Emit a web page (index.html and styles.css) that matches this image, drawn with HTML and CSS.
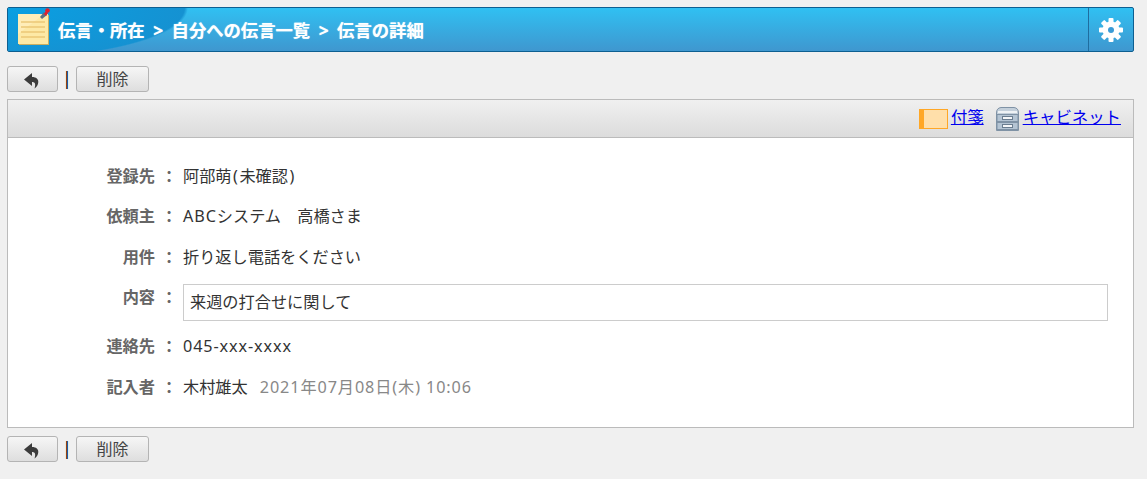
FILE: index.html
```html
<!DOCTYPE html>
<html lang="ja">
<head>
    <meta charset="UTF-8">
    <title>伝言の詳細</title>
    <link rel="stylesheet" href="styles.css">
</head>
<body>
    <div class="titlebar">
        <div class="title-main">
            <svg class="note-icon" width="33" height="37" viewBox="0 0 33 37">
                <rect x="2" y="7" width="30" height="30" fill="#c9ae62"/>
                <rect x="1" y="6" width="30" height="30" fill="#fde9a6"/>
                <path d="M1 6h26L1 26z" fill="#ffedb8"/>
                <path d="M4 14h24M4 19h24M4 24h24M4 29h24" stroke="#ecc777" stroke-width="1.500"/>
                <path d="M23 9l4-5 3 3-5 4z" fill="#5d6f80"/>
                <path d="M27 6l2-3 2 2-2 3z" fill="#e2202c"/>
                <circle cx="30.500" cy="2.500" r="2.300" fill="#e2202c"/>
            </svg>
            <span class="title-text">伝言・所在 &gt; 自分への伝言一覧 &gt; 伝言の詳細</span>
        </div>
        <div class="title-config">
            <svg width="26" height="26" viewBox="0 0 26 26">
                <circle cx="13" cy="13" r="8.500" fill="#fff"/>
                <g fill="#fff">
                    <rect x="10.500" y="1" width="5" height="24" rx="1"/>
                    <rect x="10.500" y="1" width="5" height="24" rx="1" transform="rotate(45 13 13)"/>
                    <rect x="10.500" y="1" width="5" height="24" rx="1" transform="rotate(90 13 13)"/>
                    <rect x="10.500" y="1" width="5" height="24" rx="1" transform="rotate(135 13 13)"/>
                </g>
                <circle cx="13" cy="13" r="3" fill="#3a9bd6"/>
            </svg>
        </div>
    </div>

    <div class="toolbar">
        <button class="btn btn-back" type="button">
            <svg width="18" height="16" viewBox="0 0 18 16"><path fill="#3b3b3b" d="M8 0L0 6.500 8 13V9c3 0 4 2 2.500 6.500C15 13 17 4 8 4z"/></svg>
        </button>
        <span class="sep">|</span>
        <button class="btn btn-del" type="button">削除</button>
    </div>

    <div class="panel">
        <div class="panel-head">
            <span class="tag-icon"></span><a href="#">付箋</a>
            <svg class="cabinet-icon" width="23" height="24" viewBox="0 0 23 24">
                <path d="M.5 6Q.5 1 5 .5h13q4.500.5 4.500 5.500v17.500H.5z" fill="#c3cfda" stroke="#7f92a5"/>
                <path d="M2 5h19" stroke="#eef2f5" stroke-width="2"/>
                <rect x="1" y="7.500" width="21" height="7" fill="#b4c4d3" stroke="#7f92a5"/>
                <rect x="1" y="15.500" width="21" height="7" fill="#b4c4d3" stroke="#7f92a5"/>
                <rect x="6.500" y="9.500" width="10" height="3" fill="#f4f6f8" stroke="#6a7d90"/>
                <rect x="6.500" y="17.500" width="10" height="3" fill="#f4f6f8" stroke="#6a7d90"/>
            </svg><a href="#">キャビネット</a>
        </div>
        <div class="panel-body">
            <div class="row">
                <div class="label">登録先</div><div class="colon">：</div>
                <div class="value">阿部萌<span class="paren">(</span>未確認<span class="paren">)</span></div>
            </div>
            <div class="row">
                <div class="label">依頼主</div><div class="colon">：</div>
                <div class="value"><span class="latin">ABC</span>システム　高橋さま</div>
            </div>
            <div class="row">
                <div class="label">用件</div><div class="colon">：</div>
                <div class="value">折り返し電話をください</div>
            </div>
            <div class="row row-box">
                <div class="label">内容</div><div class="colon">：</div>
                <div class="value message">来週の打合せに関して</div>
            </div>
            <div class="row">
                <div class="label">連絡先</div><div class="colon">：</div>
                <div class="value"><span class="latin">045-xxx-xxxx</span></div>
            </div>
            <div class="row row-last">
                <div class="label">記入者</div><div class="colon">：</div>
                <div class="value">木村雄太<span class="date latin">2021年07月08日(木) 10:06</span></div>
            </div>
        </div>
    </div>

    <div class="toolbar toolbar-bottom">
        <button class="btn btn-back" type="button">
            <svg width="18" height="16" viewBox="0 0 18 16"><path fill="#3b3b3b" d="M8 0L0 6.500 8 13V9c3 0 4 2 2.500 6.500C15 13 17 4 8 4z"/></svg>
        </button>
        <span class="sep">|</span>
        <button class="btn btn-del" type="button">削除</button>
    </div>
</body>
</html>
```

FILE: styles.css
```css
body {
    margin: 0;
    padding: 7px 13px 0 7px;
    background-color: #f0f0f0;
    color: #333;
    font-family: "Noto Sans", "Noto Sans CJK JP", sans-serif;
    font-size: 16.2px;
}

.titlebar {
    display: flex;
    height: 45px;
    box-sizing: border-box;
    border: 1px solid #0d5f91;
    border-radius: 2px;
    background: linear-gradient(#30c0f2, #3f97cf);
    overflow: hidden;
}

.title-main {
    flex: 1;
    display: flex;
    align-items: center;
    padding-left: 9px;
    background: radial-gradient(ellipse 180px 50px at 0 0, #0a9fe2 0, #1592d2 98%, rgba(21, 146, 210, 0) 100%);
}

.note-icon {
    margin-top: -7px;
    flex: none;
}

.title-text {
    margin-left: 8px;
    color: #fff;
    font-size: 17.33px;
    font-weight: bold;
    word-spacing: 4px;
    text-shadow: 0 0 1px rgba(255, 255, 255, 0.7);
}

.title-config {
    width: 44px;
    display: flex;
    align-items: center;
    justify-content: center;
    border-left: 1px solid #1f6d9f;
}

.toolbar {
    display: flex;
    align-items: center;
    margin-top: 14px;
    height: 26px;
}

.toolbar-bottom {
    margin-top: 8px;
}

.btn {
    height: 26px;
    box-sizing: border-box;
    padding: 0 0 3px;
    display: flex;
    align-items: center;
    justify-content: center;
    border: 1px solid #b4b4b4;
    border-radius: 3px;
    background: linear-gradient(#f6f6f6, #dedede);
    color: #444;
    font-family: inherit;
    font-size: 16px;
}

.btn-back {
    width: 51px;
    padding: 3px 0 0;
}

.btn-del {
    width: 73px;
}

.sep {
    width: 18px;
    padding-bottom: 3px;
    text-align: center;
    color: #000;
    font-size: 18px;
}

.panel {
    margin-top: 7px;
    height: 329px;
    box-sizing: border-box;
    border: 1px solid #bbb;
    background: #fff;
}

.panel-head {
    height: 38px;
    box-sizing: border-box;
    padding: 0 12px 6px 0;
    display: flex;
    align-items: center;
    justify-content: flex-end;
    border-bottom: 1px solid #bbb;
    background: linear-gradient(#f0f0f0, #dcdcdc);
    font-size: 16.4px;
}

.panel-head a {
    color: #00e;
}

.tag-icon {
    width: 23px;
    height: 18px;
    margin: 6px 3px 0 0;
    border: 1px solid #ffa726;
    border-left-width: 5px;
    background: #ffdfaa;
}

.cabinet-icon {
    margin: 7px 4px 0 12px;
}

.panel-body {
    padding: 17.5px 25px 0 0;
}

.row {
    display: flex;
    align-items: flex-start;
    min-height: 40.5px;
    line-height: 40px;
}

.row-last {
    margin-top: 1px;
}

.label {
    width: 147px;
    text-align: right;
    font-weight: bold;
    color: #666;
}

.colon {
    width: 28px;
    text-align: center;
    font-weight: bold;
    color: #666;
}

.value {
    flex: 1;
}

.latin {
    letter-spacing: 0.9px;
}

.paren {
    padding: 0 1.5px;
}

.row-box {
    min-height: 37px;
    margin-top: 6.5px;
    padding-bottom: 5px;
}

.row-box .label,
.row-box .colon {
    line-height: 26px;
}

.message {
    box-sizing: border-box;
    height: 37px;
    line-height: 35px;
    padding-left: 6px;
    border: 1px solid #ccc;
}

.date {
    margin-left: 12px;
    color: #888;
}
```
